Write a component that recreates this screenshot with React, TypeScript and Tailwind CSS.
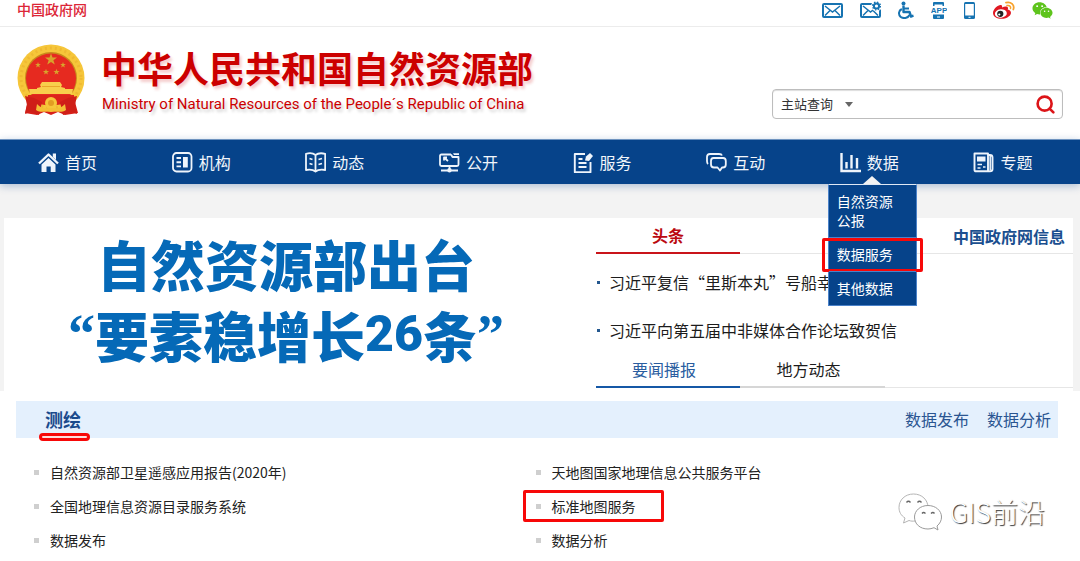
import { ReactNode } from 'react';
import { Search } from 'lucide-react';
import { FaWeixin } from 'react-icons/fa';

function Emblem() {
  const star = 'M0 -5 L1.2 -1.6 L4.8 -1.6 L1.9 .6 L3 4 L0 2 L-3 4 L-1.9 .6 L-4.8 -1.6 L-1.2 -1.6 Z';
  return (
    <svg viewBox="0 0 68 72" className="h-[72px] w-[68px] shrink-0" aria-hidden="true">
      <path d="M10 50 L25 55 L34 52 L43 55 L58 50 L58 58 L61 69 L48 71 L41 68 L34 71 L27 68 L20 71 L8 69 L10 60 Z" fill="#d8201a" />
      <circle cx="34" cy="34" r="33.5" fill="#f6c63a" />
      <circle cx="34" cy="34" r="30" fill="none" stroke="#efb932" strokeWidth="3" strokeDasharray="2 3" />
      <circle cx="34" cy="34" r="26" fill="#c98a1c" />
      <circle cx="34" cy="34.500" r="25" fill="#e62a20" />
      <g fill="#d8a32c">
        <path d={star} transform="translate(34 15.500) scale(1.250)" />
        <path d={star} transform="translate(21 21) scale(.6)" />
        <path d={star} transform="translate(46 21) scale(.6)" />
        <path d={star} transform="translate(29 28) scale(.65)" />
        <path d={star} transform="translate(39.500 28) scale(.65)" />
      </g>
      <path d="M25 38 L43 38 L45 41 L44 43 L48 44 L48 45 H56 L55 50 L13 50 L12 45 H20 L20 44 L24 43 L23 41 Z" fill="#f8cf4c" />
      <path d="M25 42.500 H43" stroke="#e9a72a" />
      <path d="M11 51 H57 V57 L46 60 L34 62 L22 60 L11 57 Z" fill="#dc251b" />
      <path d="M8 52 L17 54 L25 58 L22 71 L13 68 L8 70 L10 61 Z" fill="#cf1f18" />
      <path d="M60 52 L51 54 L43 58 L46 71 L55 68 L60 70 L58 61 Z" fill="#cf1f18" />
      <circle cx="34" cy="59" r="6" fill="#f6c63a" />
      <circle cx="34" cy="59" r="3" fill="#e29c22" />
      <path d="M20 60 C26 66 30 64 34 64 C38 64 42 66 48 60 L49 66 C43 70 39 66 34 68 C29 66 25 70 19 66 Z" fill="#f4bf36" />
    </svg>
  );
}

function MailIcon({ gear }: { gear?: boolean }) {
  return (
    <svg viewBox="0 0 21 18" className="h-[18px] w-[21px]" fill="none" stroke="#1673b1" aria-hidden="true">
      <rect x="1" y="3" width="19" height="13" rx="1" strokeWidth="2" />
      <path d="M3 5 L10.500 11 L18 5 M3 14.500 L8 9.500 M18 14.500 L13 9.500" strokeWidth="1.500" />
      {gear ? (
        <>
          <circle cx="16.500" cy="5" r="5.400" fill="#fff" stroke="none" />
          <circle cx="16.500" cy="5" r="2.600" strokeWidth="2" />
          <circle cx="16.500" cy="5" r="3.900" strokeWidth="1.400" strokeDasharray="1.500 1.560" />
        </>
      ) : null}
    </svg>
  );
}

function WheelchairIcon() {
  return (
    <svg viewBox="0 0 16 18" className="h-[18px] w-4" fill="none" stroke="#1673b1" aria-hidden="true">
      <circle cx="5.500" cy="2.500" r="2" fill="#1673b1" stroke="none" />
      <path d="M5.500 4.500 V11 H11.500 L13 15.500 L15.500 14.700" strokeWidth="2.400" strokeLinejoin="round" />
      <path d="M5.500 7.500 H11" strokeWidth="2" />
      <path d="M3.800 8 C.5 9.500 .2 13.500 2.500 15.700 C5.200 18 10 17.300 11.500 14" strokeWidth="2" />
    </svg>
  );
}

function AppIcon() {
  return (
    <svg viewBox="0 0 16 18" className="h-[18px] w-4" fill="#1673b1" aria-hidden="true">
      <path d="M2 5 V2 Q2 1 3 1 H12 Q13 1 13 2 V5 H11.500 V3.500 H3.500 V5 Z" />
      <path d="M2 13.500 V17 Q2 18 3 18 H12 Q13 18 13 17 V13.500 Z" />
      <rect x="6" y="15.500" width="3" height="1" fill="#fff" />
      <text x="8" y="12" textAnchor="middle" fontSize="8" fontWeight="700" fontFamily="Liberation Sans, sans-serif">
        APP
      </text>
    </svg>
  );
}

function PhoneIcon() {
  return (
    <svg viewBox="0 0 11 18" className="h-[18px] w-[11px]" aria-hidden="true">
      <rect x="0" y="1" width="11" height="17" rx="1.500" fill="#1673b1" />
      <rect x="1.200" y="3" width="8.600" height="11.500" fill="#fff" />
      <rect x="4.500" y="15.800" width="2" height="1" fill="#fff" />
    </svg>
  );
}

function WeiboIcon() {
  return (
    <svg viewBox="0 0 23 18" className="h-[18px] w-[23px]" aria-hidden="true">
      <path d="M1 12 C1 8 7 3 9.500 4.300 C10.600 4.900 10 6.500 10 6.500 C12 5.500 15.500 5 16 6.800 C16.300 7.800 15.600 8.600 15.600 8.600 C18 9 19 10.400 19 12 C18.500 15.500 14 17.800 9.500 17.800 C5 17.800 1 15.800 1 12 Z" fill="#e01822" />
      <ellipse cx="8.800" cy="12.500" rx="6" ry="4.200" fill="#fff" transform="rotate(-6 9 12)" />
      <circle cx="8.300" cy="12.800" r="3.100" fill="#222" />
      <circle cx="7.300" cy="13.500" r="1.100" fill="#fff" />
      <path d="M14 1.600 C19 .3 23 4 21.300 8.500" fill="none" stroke="#f8a22c" strokeWidth="1.800" strokeLinecap="round" />
      <path d="M15 4.600 C17.500 4 19.200 5.700 18.500 7.600" fill="none" stroke="#f8a22c" strokeWidth="1.500" strokeLinecap="round" />
    </svg>
  );
}

function NavSvg({ children }: { children: ReactNode }) {
  return (
    <svg
      viewBox="0 0 21 21"
      className="h-[21px] w-[21px] shrink-0"
      fill="none"
      stroke="#eef4fb"
      strokeWidth="1.800"
      strokeLinejoin="round"
      aria-hidden="true"
    >
      {children}
    </svg>
  );
}

const navItems: { label: string; icon: ReactNode; menu?: string[] }[] = [
  {
    label: '首页',
    icon: (
      <>
        <path d="M1 11.500 L10.500 2.500 L20 11.500" strokeWidth="2.400" />
        <path d="M14.800 1.500 H18 V8 L14.800 5 Z" fill="#eef4fb" stroke="none" />
        <path d="M10.500 6 L17.500 12.500 V20 H12.700 V14.500 H8.500 V20 H3.500 V12.500 Z" fill="#eef4fb" stroke="none" />
      </>
    ),
  },
  {
    label: '机构',
    icon: (
      <>
        <rect x="1" y="1" width="18.500" height="18.500" rx="3.500" />
        <path d="M4.500 6 H9 M4.500 10.200 H9 M4.500 14.400 H9" strokeWidth="1.900" />
        <rect x="11" y="5" width="4.800" height="10.500" fill="#eef4fb" stroke="none" />
      </>
    ),
  },
  {
    label: '动态',
    icon: (
      <>
        <path d="M10.500 3 C8 1 4 1 1 1.800 V18 C4 17.500 8 17.500 10.500 19.500 C13 17.500 17 17.500 20.200 18 V1.800 C17 1 13 1 10.500 3 V19" />
        <path d="M4.500 6.500 L7.500 7.500 M4.500 11.500 L7.500 12.500 M17 6.500 L13.500 7.500 M17 11.500 L13.500 12.500" strokeWidth="1.800" />
      </>
    ),
  },
  {
    label: '公开',
    icon: (
      <>
        <path d="M12 2.500 H2.500 Q1 2.500 1 4 V12.500 Q1 14 2.500 14 H18 Q19.500 14 19.500 12.500 V5 H13.500 L12 2.500" />
        <path d="M14 1.200 H20 V3 H15 Z" fill="#eef4fb" stroke="none" />
        <path d="M5 8.500 V5.500 H8 M5.500 6 L9 9 M10.500 14 V18 M2 18.500 H19" />
        <circle cx="10.500" cy="18.200" r="2.200" fill="#eef4fb" stroke="none" />
      </>
    ),
  },
  {
    label: '服务',
    icon: (
      <>
        <path d="M12 2 H1.800 V20.200 H17.500 V10" strokeWidth="1.900" />
        <path d="M5.500 7 H9.500 M5.500 11 H13.500 M5.500 15 H13.500" strokeWidth="1.800" />
        <path d="M13 4.500 L17 1 L20 4 L16 9 L12 8.500 Z" fill="#eef4fb" stroke="none" />
      </>
    ),
  },
  {
    label: '互动',
    icon: (
      <>
        <path d="M2 12 C1 11 1 10 1 9 V5 Q1 2 4 2 H13 Q15.500 2 16 3.500" />
        <path d="M7.500 6 H17 Q19.800 6 19.800 9 V12.500 Q19.800 15.500 17 15.500 H16 L14 18.500 L11.500 15.500 H8 Q5 15.500 5 12.500 V9 Q5 6 7.500 6 Z" />
      </>
    ),
  },
  {
    label: '数据',
    icon: (
      <path d="M1.500 1 V19 H21 M6.500 10 V16.500 M11.500 3 V16.500 M17 6 V16.500" strokeWidth="2.400" strokeLinejoin="miter" />
    ),
    menu: ['自然资源公报', '数据服务', '其他数据'],
  },
  {
    label: '专题',
    icon: (
      <>
        <path d="M1.500 1.500 H15 V19.300 H3 Q1.500 19.300 1.500 18 Z M15 3 H17 Q19.500 3 19.500 5.500 V17 Q19.500 19.300 17 19.300 H15" strokeWidth="1.900" />
        <rect x="4" y="4.500" width="8.500" height="5" fill="#eef4fb" stroke="none" />
        <path d="M4.500 12.500 H9 M4.500 16 H7.500 M10 15 H12.500 M17.200 4 V18" strokeWidth="1.500" />
      </>
    ),
  },
];

const services = [
  '自然资源部卫星遥感应用报告(2020年)',
  '天地图国家地理信息公共服务平台',
  '全国地理信息资源目录服务系统',
  '标准地图服务',
  '数据发布',
  '数据分析',
];

const headlines = ['习近平复信“里斯本丸”号船幸', '习近平向第五届中非媒体合作论坛致贺信'];

function TopBar() {
  return (
    <div className="flex h-[27px] items-start justify-between border-b border-[#ececec] pr-[27px] pl-[17px]">
      <a href="#gov" className="text-sm leading-[18px] font-medium text-[#dc2637]">
        中国政府网
      </a>
      <div className="flex h-5 items-center gap-[17px]">
        <a href="#mail" aria-label="邮箱"><MailIcon /></a>
        <a href="#mail-settings" aria-label="邮箱设置"><MailIcon gear /></a>
        <a href="#accessible" aria-label="无障碍"><WheelchairIcon /></a>
        <a href="#app" aria-label="客户端"><AppIcon /></a>
        <a href="#mobile" aria-label="手机版"><PhoneIcon /></a>
        <a href="#weibo" aria-label="微博"><WeiboIcon /></a>
        <a href="#wechat" aria-label="微信"><FaWeixin className="h-[19px] w-[21px] text-[#5ec41c]" /></a>
      </div>
    </div>
  );
}

function SiteHeader() {
  return (
    <header className="flex h-28 items-start justify-between pt-[17px] pr-[17px] pl-[17px]">
      <div className="flex gap-4">
        <Emblem />
        <div className="text-[#cc0000]">
          <h1 className="text-4xl leading-[46px] font-bold whitespace-nowrap [text-shadow:2px_3px_3px_rgba(204,0,0,0.2)]">
            中华人民共和国自然资源部
          </h1>
          <p className="pt-1 pl-px font-['Roboto'] text-[15px] leading-5 whitespace-nowrap [text-shadow:2px_3px_3px_rgba(0,0,0,0.2)]">
            Ministry of Natural Resources of the People´s Republic of China
          </p>
        </div>
      </div>
      <form className="mt-[45px] flex h-[30px] w-[291px] items-center rounded border border-[#bdbdbd] shadow-[inset_0_1px_1px_#dddddd]">
        <div className="relative flex shrink-0 items-center">
          <select
            aria-label="查询范围"
            className="h-7 w-20 appearance-none bg-transparent pl-2 text-[13px] text-[#333333] outline-none"
          >
            <option>主站查询</option>
          </select>
          <svg viewBox="0 0 8 5" className="pointer-events-none absolute right-0 h-[5px] w-2" aria-hidden="true">
            <path d="M0 0 H8 L4 5 Z" fill="#666" />
          </svg>
        </div>
        <input type="text" aria-label="查询内容" className="min-w-0 flex-1 bg-transparent px-2 text-[13px] outline-none" />
        <button type="button" aria-label="搜索" className="shrink-0 px-[6px]">
          <Search size={21} strokeWidth={3} className="text-[#dc1418]" />
        </button>
      </form>
    </header>
  );
}

function DropDown({ items }: { items: string[] }) {
  return (
    <div className="absolute top-9 left-[22px] z-10 w-[89px]">
      <svg viewBox="0 0 18 8" className="mx-auto h-2 w-[18px]" aria-hidden="true">
        <path d="M9 0 L18 8 H0 Z" fill="#f2f2f2" />
      </svg>
      <ul className="border border-[#4b82c9] border-t-[#dfe8f4] bg-[#06438a]">
        {items.map((item, i) => (
          <li key={item} className={i > 0 ? 'relative border-t border-[#4b82c9]' : 'relative'}>
            <a href="#data" className="block px-2 py-[7px] text-sm leading-[19px] text-white">
              {item === '自然资源公报' ? <>自然资源<br />公报</> : item}
            </a>
            {item === '数据服务' ? (
              <span className="pointer-events-none absolute -inset-x-[7px] top-0 -bottom-px rounded-xs border-3 border-[#f70808]" />
            ) : null}
          </li>
        ))}
      </ul>
    </div>
  );
}

function MainNav() {
  return (
    <nav className="relative border-t border-[#6f93bf] bg-[#06438a] pr-[7px] pl-1 shadow-[0_2px_8px_rgba(6,67,138,0.3)]">
      <ul className="grid grid-cols-8">
        {navItems.map((item) => (
          <li key={item.label} className="relative">
            <a href="#nav" className="flex h-11 items-center gap-[6px] pl-[34px] text-base text-[#f2f6fb]">
              <NavSvg>{item.icon}</NavSvg>
              {item.label}
            </a>
            {item.menu ? <DropDown items={item.menu} /> : null}
          </li>
        ))}
      </ul>
    </nav>
  );
}

function Banner() {
  return (
    <div className="w-[592px] shrink-0 pt-[10px] pr-7 text-center text-[54px] leading-[71px] font-black text-[#0569b7]">
      <p>自然资源部出台</p>
      <p className="flex items-center justify-center">
        <span className="font-['Liberation_Serif']">“</span>
        要素稳增长
        <span className="font-['Roboto'] text-[50px]">26</span>
        条
        <span className="font-['Liberation_Serif']">”</span>
      </p>
    </div>
  );
}

function News() {
  return (
    <div className="min-w-0 flex-1">
      <div className="flex h-[36px] items-end justify-between border-b border-[#e6e6e6] text-base font-bold">
        <button type="button" className="-mb-px h-[37px] w-36 border-b-2 border-[#c9141a] font-bold text-[#bb0a10]">
          头条
        </button>
        <a href="#info" className="flex h-full items-center pr-2 text-[#1b4f8f]">
          中国政府网信息
        </a>
      </div>
      <ul className="pt-1">
        {headlines.map((line) => (
          <li key={line} className="flex h-12 items-center gap-[9px] pl-px">
            <span className="size-[3px] bg-[#24588f]" />
            <a href="#news" className="text-base whitespace-nowrap text-[#1c1c1c]">{line}</a>
          </li>
        ))}
      </ul>
      <div className="flex h-[34px] items-end border-b border-[#e6e6e6] text-base">
        <button type="button" className="-mb-px h-[36px] w-36 border-b-2 border-[#1558a6] pr-2 text-[#2a5d9f]">
          要闻播报
        </button>
        <button type="button" className="-mb-px h-[36px] w-[145px] border-b-2 border-[#d6d6d6] pr-2 text-[#1c1c1c]">
          地方动态
        </button>
      </div>
    </div>
  );
}

function Watermark() {
  return (
    <div className="pointer-events-none absolute right-[35px] bottom-[30px] flex items-center gap-2">
      <svg viewBox="0 0 44 38" className="h-[38px] w-11" fill="#fff" stroke="#9a9a9a" aria-hidden="true">
        <path d="M15.500 1 C7 1 1 7 1 14.500 C1 19 3 22.500 7 25 L5.500 30 L11 27.500 C13 28.200 15 28.300 17 28 C24 28 30 21.500 30 14.500 C30 7 24 1 15.500 1 Z" stroke="#b5b5b5" />
        <path d="M30 12.500 C22 12.500 16.500 18 16.500 24 C16.500 31 22 36 30 36 C32 36 34 35.500 36 34.700 L40 37 L39 33 C42 30.500 43.500 27.500 43.500 24 C43.500 17.500 37.500 12.500 30 12.500 Z" />
        <path d="M8.500 9.500 Q10.500 7 12.500 9.500 M19.500 9.500 Q21.500 7 23.500 9.500 M24 20.500 Q25.500 18.500 27.500 20.500 M33 20.500 Q35 18.500 36.500 20.500" fill="none" stroke="#666" strokeWidth="1.300" />
      </svg>
      <span className="text-[27px] leading-9 font-light text-white [text-shadow:1px_1px_1px_#333333]">GIS前沿</span>
    </div>
  );
}

function Mapping() {
  return (
    <section className="relative mr-[22px] ml-4 pt-[10px]">
      <div className="flex h-[37px] items-center justify-between bg-[#e4f0fd] pr-[7px] pl-[29px]">
        <h2 className="relative pb-[2px] text-lg font-bold text-[#1a4a8c]">
          测绘
          <span className="absolute -right-[9px] -bottom-[6px] -left-[6px] h-2 rounded-sm border-[3px] border-[#f70808] bg-[#ffdcdc]" />
        </h2>
        <div className="flex gap-[18px] pb-[2px] text-base text-[#2a5591]">
          <a href="#publish">数据发布</a>
          <a href="#analysis">数据分析</a>
        </div>
      </div>
      <ul className="grid grid-cols-2 pt-[17px] pr-[21px] pl-[18px]">
        {services.map((name) => (
          <li key={name} className="flex h-[34px] items-center gap-[11px]">
            <span className="size-[5px] bg-[#cfcfcf]" />
            <a href="#service" className="relative text-sm whitespace-nowrap text-[#222222]">
              {name}
              {name === '标准地图服务' ? (
                <span className="absolute -top-[6px] -right-[28px] -bottom-[6px] -left-[29px] rounded-xs border-3 border-[#f70808]" />
              ) : null}
            </a>
          </li>
        ))}
      </ul>
    </section>
  );
}

export default function App() {
  return (
    <div className="relative min-h-screen bg-white font-['Noto_Sans_CJK_SC',sans-serif]">
      <TopBar />
      <SiteHeader />
      <MainNav />
      <main>
        <div className="bg-[#f3f3f3] pt-[34px] pr-[7px] pl-1">
          <div className="flex bg-white pb-[3px]">
            <Banner />
            <News />
          </div>
        </div>
        <Mapping />
      </main>
      <Watermark />
    </div>
  );
}
